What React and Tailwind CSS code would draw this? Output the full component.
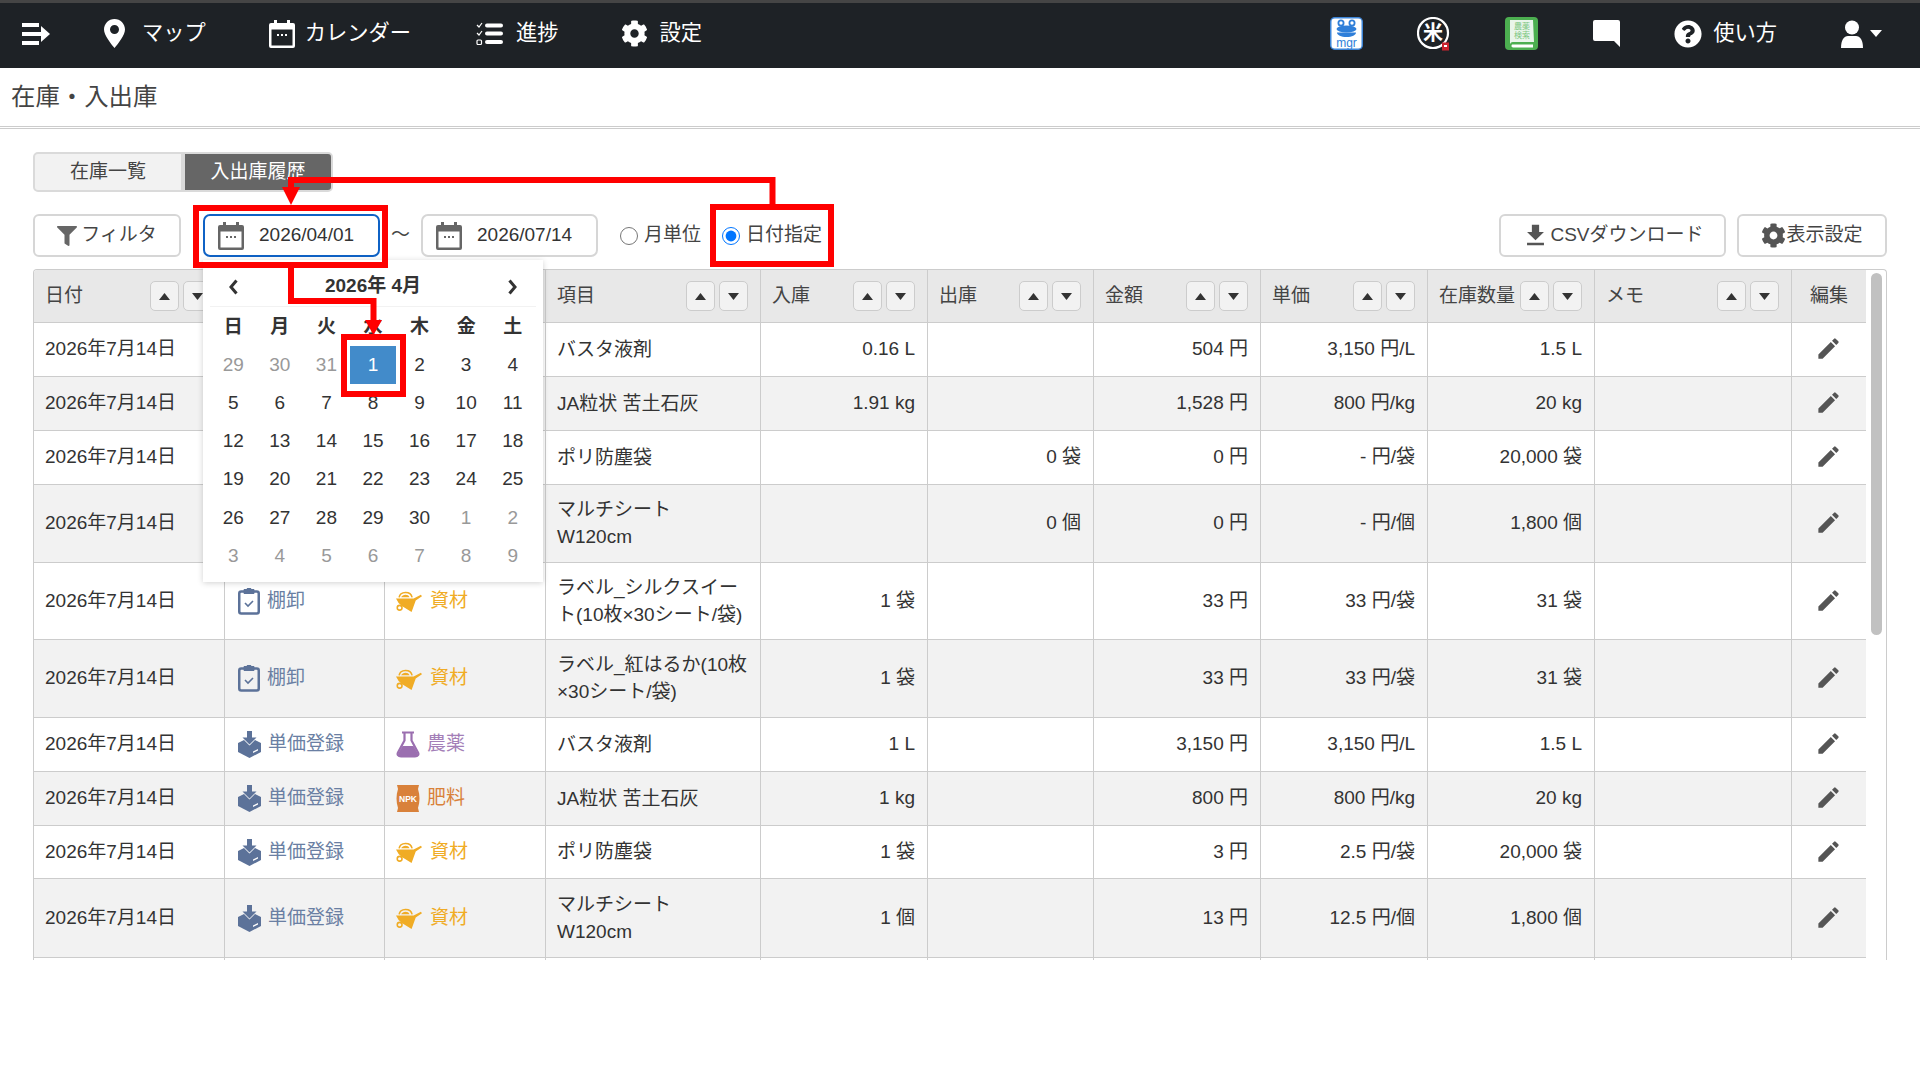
import { FaCog, FaFilter, FaQuestionCircle } from 'react-icons/fa';
import { MdEdit, MdFileDownload } from 'react-icons/md';

function Hamburger() {
  return (
    <svg width="28" height="22" viewBox="0 0 28 22" fill="#fff">
      <rect x="0" y="0" width="17" height="4" />
      <rect x="0" y="9" width="20" height="4" />
      <rect x="0" y="18" width="17" height="4" />
      <path d="M19 3l9 8-9 8z" />
    </svg>
  );
}

function Marker() {
  return (
    <svg width="21" height="29" viewBox="0 0 21 29" fill="#fff">
      <path fillRule="evenodd" d="M10.5 0C4.7 0 0 4.7 0 10.5 0 16 7 25 10.5 29 14 25 21 16 21 10.5 21 4.7 16.3 0 10.5 0zM10.5 6a4.5 4.5 0 110 9 4.5 4.5 0 010-9z" />
    </svg>
  );
}

function CalendarIcon({ color = '#fff' }) {
  return (
    <svg width="26" height="28" viewBox="0 0 26 28" fill={color}>
      <path fillRule="evenodd" d="M2 3h22a2 2 0 012 2v21a2 2 0 01-2 2H2a2 2 0 01-2-2V5a2 2 0 012-2zM2.5 9.5v16h21v-16z" />
      <rect x="5" y="0" width="3" height="5" />
      <rect x="18" y="0" width="3" height="5" />
      <rect x="8" y="14" width="2" height="2" />
      <rect x="12" y="14" width="2" height="2" />
      <rect x="16" y="14" width="2" height="2" />
    </svg>
  );
}

function ListCheck() {
  return (
    <svg width="27" height="24" viewBox="0 0 27 24" fill="none" stroke="#fff">
      <path d="M1 3l2 2 3-4M1 11l2 2 3-4" strokeWidth="1.2" />
      <rect x="1" y="18" width="4.5" height="4.5" rx="1" strokeWidth="1.2" />
      <path d="M11 3.5h14M11 11.5h14M11 20h14" strokeWidth="4" strokeLinecap="round" />
    </svg>
  );
}

function CommentBox() {
  return (
    <svg width="27" height="27" viewBox="0 0 27 27" fill="#fff">
      <path d="M2 0h23a2 2 0 012 2v25l-6-6H2a2 2 0 01-2-2V2a2 2 0 012-2z" />
    </svg>
  );
}

function UserIcon() {
  return (
    <svg width="22" height="28" viewBox="0 0 22 28" fill="#fff">
      <circle cx="11" cy="7.5" r="7" />
      <path d="M0 28c0-8 3-12 7-12h8c4 0 7 4 7 12z" />
    </svg>
  );
}

function MgrIcon() {
  return (
    <svg width="33" height="33" viewBox="0 0 33 33">
      <rect x="0.75" y="0.75" width="31.5" height="31.5" rx="4" fill="#fff" stroke="#3d85d8" strokeWidth="1.5" />
      <circle cx="11" cy="6" r="2.6" fill="none" stroke="#2f7fd9" strokeWidth="1.8" />
      <circle cx="22" cy="6" r="2.6" fill="none" stroke="#2f7fd9" strokeWidth="1.8" />
      <ellipse cx="16.5" cy="12" rx="10" ry="3.5" fill="#2f7fd9" />
      <path d="M7 15.500h19c0 2.500-4 4.500-9.500 4.500S7 18 7 15.500z" fill="#2f7fd9" />
      <text x="16.5" y="30" textAnchor="middle" fontSize="12" fill="#2f7fd9">mgr</text>
    </svg>
  );
}

function RiceIcon() {
  return (
    <svg width="34" height="34" viewBox="0 0 34 34">
      <circle cx="16" cy="16" r="15" fill="none" stroke="#fff" strokeWidth="2.2" />
      <text x="16" y="23" textAnchor="middle" fontSize="20" fontWeight="700" fill="#fff">米</text>
      <rect x="25" y="25.500" width="7" height="8" fill="#c9242f" />
      <path d="M27 28h3v2h-3z" fill="#fff" />
    </svg>
  );
}

function BookIcon() {
  return (
    <svg width="33" height="33" viewBox="0 0 33 33">
      <rect width="33" height="33" rx="4" fill="#4caf50" />
      <path d="M5 3h23l1 22H8a3 3 0 00-3 2z" fill="#e9f5ea" />
      <path d="M7 27.500h21v3H8a2 2 0 01-1-3z" fill="#fff" />
      <text x="17" y="12" textAnchor="middle" fontSize="8" fill="#7cc67f">農薬</text>
      <text x="17" y="21" textAnchor="middle" fontSize="8" fill="#7cc67f">検索</text>
    </svg>
  );
}

function ClipboardIcon() {
  return (
    <svg width="22" height="27" viewBox="0 0 22 27" fill="none" stroke="#5c7299">
      <rect x="1.250" y="3.500" width="19.500" height="22" rx="2" strokeWidth="2.500" />
      <path d="M6 1.500h3a2 2 0 014 0h3v4H6z" fill="#5c7299" strokeWidth="1" />
      <path d="M7 15l3 3 5-5" strokeWidth="1.600" />
    </svg>
  );
}

function InboxIcon() {
  return (
    <svg width="23" height="27" viewBox="0 0 23 27" fill="#5c7299">
      <rect x="9" y="0" width="5" height="7" />
      <path d="M4.500 6.500h14l-7 7z" />
      <path d="M6 9l5.500 5.500L17 9l6 3v9l-11.500 6L0 21v-9z" />
      <path d="M15 20.500l5-2.500v1.500l-5 2.500z" fill="#fff" />
    </svg>
  );
}

function FlaskIcon() {
  return (
    <svg width="24" height="27" viewBox="0 0 24 27" fill="#9b6fb0" stroke="#9b6fb0">
      <path d="M6 1.500h12M8.500 1.500v8L2 21.500c-1 2 0 4 3 4h14c3 0 4-2 3-4L15.500 9.500v-8" fill="none" strokeWidth="2.200" />
      <path d="M6.500 15h11l4 7c1 2 0 4-3 4h-13c-3 0-4-2-3-4z" strokeWidth="0" />
    </svg>
  );
}

function NpkIcon() {
  return (
    <svg width="24" height="27" viewBox="0 0 24 27">
      <path d="M1 0h22l-1 4c2 6 2 13 0 19l1 4H1l1-4C0 17 0 10 2 4z" fill="#d9813a" />
      <text x="12" y="16.500" textAnchor="middle" fontSize="8.500" fontWeight="700" fill="#fff">NPK</text>
    </svg>
  );
}

function BarrowIcon() {
  return (
    <svg width="27" height="22" viewBox="0 0 26 21" fill="#f0ac25">
      <path d="M0 8h17l7-3.500 1 1.500-6 4-4 11-9-5.500-3.500-3z" />
      <path d="M5 7c1-3 7-3.500 8 0z" />
      <path d="M3 7c1-6 11-6.500 12.500 0" fill="none" stroke="#f0ac25" strokeWidth="1.500" />
      <circle cx="3.500" cy="17" r="2.300" fill="none" stroke="#f0ac25" strokeWidth="1.500" />
    </svg>
  );
}

function Chevron({ left }) {
  return (
    <svg width="9" height="16" viewBox="0 0 9 16" fill="none" stroke="#333" strokeWidth="3">
      <path d={left ? 'M7.500 1.500L2 8l5.500 6.500' : 'M1.500 1.500L7 8l-5.500 6.500'} />
    </svg>
  );
}

function SortButton({ up }) {
  return (
    <span className="flex h-[30px] w-[29px] items-center justify-center rounded-[5px] border border-[#ccc] bg-[#f2f2f2]">
      <svg width="11" height="7" viewBox="0 0 11 7" fill="#333">
        <path d={up ? 'M5.500 0L11 7H0z' : 'M5.500 7L11 0H0z'} />
      </svg>
    </span>
  );
}

function NavItem({ icon, label, className }) {
  return (
    <div className={`flex items-center text-[21.25px] text-white ${className}`}>
      {icon}
      <span>{label}</span>
    </div>
  );
}

function OutlineButton({ children, className }) {
  return (
    <div className={`flex h-[43px] items-center justify-center rounded-[6px] border-2 border-[#d6d6d6] bg-white text-[#444] ${className}`}>
      {children}
    </div>
  );
}

function DateInput({ value, focused }) {
  return (
    <div className={`flex h-[43px] w-[177px] items-center rounded-[7px] bg-white pl-[13px] ${focused ? 'border-[2.500px] border-[#0f62c5]' : 'border-2 border-[#d6d6d6]'}`}>
      <CalendarIcon color="#666" />
      <span className="ml-[15px] text-[#333]">{value}</span>
    </div>
  );
}

const weekdays = ['日', '月', '火', '水', '木', '金', '土'];

const days = [
  [29, 1], [30, 1], [31, 1], [1, 0, 1], [2], [3], [4],
  [5], [6], [7], [8], [9], [10], [11],
  [12], [13], [14], [15], [16], [17], [18],
  [19], [20], [21], [22], [23], [24], [25],
  [26], [27], [28], [29], [30], [1, 1], [2, 1],
  [3, 1], [4, 1], [5, 1], [6, 1], [7, 1], [8, 1], [9, 1],
];

function CalendarPopup() {
  return (
    <div className="absolute left-0 top-[46px] z-20 h-[322px] w-[340px] bg-white px-[7px] shadow-[0_1px_6px_rgba(0,0,0,0.18)]">
      <div className="flex h-[47px] items-center justify-between border-b border-[#f2f2f2] px-[19px] pt-[7px] font-bold text-[#333]">
        <Chevron left />
        <span>2026年 4月</span>
        <Chevron />
      </div>
      <div className="grid grid-cols-7 text-center">
        {weekdays.map((d) => (
          <div key={d} className="flex h-[39px] items-center justify-center pt-[1px] font-bold text-[#333]">{d}</div>
        ))}
        {days.map(([n, muted, selected], i) => (
          <div key={i} className={`flex h-[38.200px] items-center justify-center ${muted ? 'text-[#999]' : 'text-[#333]'}`}>
            {selected ? (
              <span className="flex h-[38px] w-[46px] items-center justify-center bg-[#428bca] text-white">{n}</span>
            ) : n}
          </div>
        ))}
      </div>
    </div>
  );
}

const kinds = {
  tana: { icon: <ClipboardIcon />, label: '棚卸' },
  price: { icon: <InboxIcon />, label: '単価登録' },
};

const cats = {
  shizai: { icon: <BarrowIcon />, label: '資材', color: 'text-[#f0ac25]' },
  noyaku: { icon: <FlaskIcon />, label: '農薬', color: 'text-[#a47fb8]' },
  hiryo: { icon: <NpkIcon />, label: '肥料', color: 'text-[#d9813a]' },
};

const rows = [
  { h: 'h-[54px]', item: 'バスタ液剤', inn: '0.16 L', amount: '504 円', unit: '3,150 円/L', stock: '1.5 L' },
  { h: 'h-[54px]', item: 'JA粒状 苦土石灰', inn: '1.91 kg', amount: '1,528 円', unit: '800 円/kg', stock: '20 kg' },
  { h: 'h-[54px]', item: 'ポリ防塵袋', out: '0 袋', amount: '0 円', unit: '- 円/袋', stock: '20,000 袋' },
  { h: 'h-[78px]', item: 'マルチシート\nW120cm', out: '0 個', amount: '0 円', unit: '- 円/個', stock: '1,800 個' },
  { h: 'h-[77px]', kind: 'tana', cat: 'shizai', item: 'ラベル_シルクスイー\nト(10枚×30シート/袋)', inn: '1 袋', amount: '33 円', unit: '33 円/袋', stock: '31 袋' },
  { h: 'h-[78px]', kind: 'tana', cat: 'shizai', item: 'ラベル_紅はるか(10枚\n×30シート/袋)', inn: '1 袋', amount: '33 円', unit: '33 円/袋', stock: '31 袋' },
  { h: 'h-[54px]', kind: 'price', cat: 'noyaku', item: 'バスタ液剤', inn: '1 L', amount: '3,150 円', unit: '3,150 円/L', stock: '1.5 L' },
  { h: 'h-[54px]', kind: 'price', cat: 'hiryo', item: 'JA粒状 苦土石灰', inn: '1 kg', amount: '800 円', unit: '800 円/kg', stock: '20 kg' },
  { h: 'h-[53px]', kind: 'price', cat: 'shizai', item: 'ポリ防塵袋', inn: '1 袋', amount: '3 円', unit: '2.5 円/袋', stock: '20,000 袋' },
  { h: 'h-[79px]', kind: 'price', cat: 'shizai', item: 'マルチシート\nW120cm', inn: '1 個', amount: '13 円', unit: '12.5 円/個', stock: '1,800 個' },
];

const headers = ['日付', '', '', '項目', '入庫', '出庫', '金額', '単価', '在庫数量', 'メモ'];
const cell = 'border-r border-b border-[#ccc] px-[11px]';
const num = 'border-r border-b border-[#ccc] pl-[11px] pr-[12px] text-right';

function StockTable() {
  return (
    <table className="w-[1832px] table-fixed border-separate border-spacing-0 text-[#333]">
      <colgroup>
        <col className="w-[191px]" />
        <col className="w-[160px]" />
        <col className="w-[161px]" />
        <col className="w-[215px]" />
        <col className="w-[167px]" />
        <col className="w-[166px]" />
        <col className="w-[167px]" />
        <col className="w-[167px]" />
        <col className="w-[167px]" />
        <col className="w-[197px]" />
        <col className="w-[74px]" />
      </colgroup>
      <thead>
        <tr className="h-[53px] bg-[#e8e8e8] text-[#444]">
          {headers.map((h, i) => (
            <th key={i} className="border-r border-b border-[#ccc] pl-[11px] pr-[12px] font-normal">
              <div className="flex items-center justify-between">
                <span className="whitespace-nowrap">{h}</span>
                <span className="flex gap-[4px]">
                  <SortButton up />
                  <SortButton />
                </span>
              </div>
            </th>
          ))}
          <th className="border-b border-[#ccc] text-center font-normal">編集</th>
        </tr>
      </thead>
      <tbody>
        {rows.map((r, i) => (
          <tr key={i} className={`${r.h} ${i % 2 ? 'bg-[#f2f2f2]' : 'bg-white'}`}>
            <td className={cell}>2026年7月14日</td>
            <td className={cell}>
              {r.kind && (
                <div className="flex items-center gap-[7px] pl-[2px] text-[#6a7fa3]">
                  {kinds[r.kind].icon}
                  <span>{kinds[r.kind].label}</span>
                </div>
              )}
            </td>
            <td className={cell}>
              {r.cat && (
                <div className={`flex items-center gap-[7px] ${cats[r.cat].color}`}>
                  {cats[r.cat].icon}
                  <span>{cats[r.cat].label}</span>
                </div>
              )}
            </td>
            <td className={`${cell} whitespace-pre-line pb-[1px] leading-[27px]`}>{r.item}</td>
            <td className={num}>{r.inn}</td>
            <td className={num}>{r.out}</td>
            <td className={num}>{r.amount}</td>
            <td className={num}>{r.unit}</td>
            <td className={num}>{r.stock}</td>
            <td className={cell}></td>
            <td className="border-b border-[#ccc] pb-[2px] pr-[2px]">
              <MdEdit className="mx-auto text-[#555]" size={27} />
            </td>
          </tr>
        ))}
        <tr className="h-[20px] bg-white">
          {headers.map((h, i) => (
            <td key={i} className="border-r border-[#ccc]"></td>
          ))}
          <td></td>
        </tr>
      </tbody>
    </table>
  );
}

// red guide lines drawn over the page
function Annotations() {
  return (
    <svg className="pointer-events-none absolute left-0 top-0 z-30" width="1920" height="1080" fill="none">
      <rect x="196" y="208" width="189" height="57" stroke="#f00" strokeWidth="6" />
      <rect x="713" y="207" width="118" height="57" stroke="#f00" strokeWidth="6" />
      <rect x="344" y="337" width="59" height="57" stroke="#f00" strokeWidth="6" />
      <path d="M772.500 205V180H291V190" stroke="#f00" strokeWidth="6" />
      <path d="M282 187h18l-9 18z" fill="#f00" />
      <path d="M291 268V301H373.500V322" stroke="#f00" strokeWidth="6" />
      <path d="M365 320h17l-8.500 15z" fill="#f00" />
    </svg>
  );
}

export default function App() {
  return (
    <div className="relative h-[1080px] w-[1920px] overflow-hidden bg-white font-['Liberation_Sans','Noto_Sans_CJK_JP',sans-serif] text-[19px]">
      <nav className="flex h-[68px] items-center border-t-[3px] border-[#454545] bg-[#1e2226] pb-[4px] pl-[22px]">
        <Hamburger />
        <NavItem className="ml-[54px]" icon={<Marker />} label={<span className="ml-[17px]">マップ</span>} />
        <NavItem className="ml-[63px]" icon={<CalendarIcon />} label={<span className="ml-[10px]">カレンダー</span>} />
        <NavItem className="ml-[65px]" icon={<ListCheck />} label={<span className="ml-[13px]">進捗</span>} />
        <NavItem className="ml-[62px]" icon={<FaCog size={27} />} label={<span className="ml-[12px]">設定</span>} />
        <div className="ml-auto flex items-center pr-[38px]">
          <MgrIcon />
          <div className="ml-[54px]"><RiceIcon /></div>
          <div className="ml-[54px]"><BookIcon /></div>
          <div className="ml-[55px]"><CommentBox /></div>
          <NavItem className="ml-[54px]" icon={<FaQuestionCircle size={28} />} label={<span className="ml-[11px]">使い方</span>} />
          <div className="ml-[64px]"><UserIcon /></div>
          <svg className="ml-[7px]" width="12" height="7" viewBox="0 0 12 7" fill="#fff"><path d="M0 0h12L6 7z" /></svg>
        </div>
      </nav>

      <div className="flex h-[61px] items-center border-b-[3px] border-double border-[#ccc] pl-[11px] text-[24.400px] text-[#444]">在庫・入出庫</div>

      <main className="px-[33px] pt-[23px]">
        <div className="flex h-[40px] w-[300px]">
          <div className="flex w-[150px] items-center justify-center rounded-l-[5px] border-2 border-[#dadada] bg-[#f2f2f2] text-[#444]">在庫一覧</div>
          <div className="flex w-[150px] items-center justify-center rounded-r-[5px] border-2 border-[#dadada] bg-[#666] text-white">入出庫履歴</div>
        </div>

        <div className="mt-[22px] flex items-center">
          <OutlineButton className="w-[148px] gap-[4px]">
            <FaFilter className="text-[#666]" size={20} />
            <span>フィルタ</span>
          </OutlineButton>
          <div className="relative ml-[22px]">
            <DateInput value="2026/04/01" focused />
            <CalendarPopup />
          </div>
          <span className="flex w-[41px] justify-center text-[#444]">〜</span>
          <DateInput value="2026/07/14" />
          <label className="ml-[22px] flex items-center gap-[6px] text-[#444]">
            <input type="radio" name="range" className="h-[18px] w-[18px]" />
            月単位
          </label>
          <label className="ml-[21px] flex items-center gap-[6px] text-[#444]">
            <input type="radio" name="range" defaultChecked className="h-[18px] w-[18px]" />
            日付指定
          </label>
          <div className="ml-auto flex gap-[11px]">
            <OutlineButton className="w-[227px]">
              <MdFileDownload className="text-[#555]" size={29} />
              <span>CSVダウンロード</span>
            </OutlineButton>
            <OutlineButton className="w-[150px]">
              <FaCog className="text-[#555]" size={25} />
              <span>表示設定</span>
            </OutlineButton>
          </div>
        </div>

        <div className="mt-[12px] flex h-[691px] overflow-hidden rounded-t-[4px] border-x border-t border-[#ccc]">
          <StockTable />
          <div className="w-[20px] pl-[5px] pt-[3px]">
            <div className="h-[362px] w-[11px] rounded-[6px] bg-[#c1c1c1]"></div>
          </div>
        </div>
      </main>

      <Annotations />
    </div>
  );
}
